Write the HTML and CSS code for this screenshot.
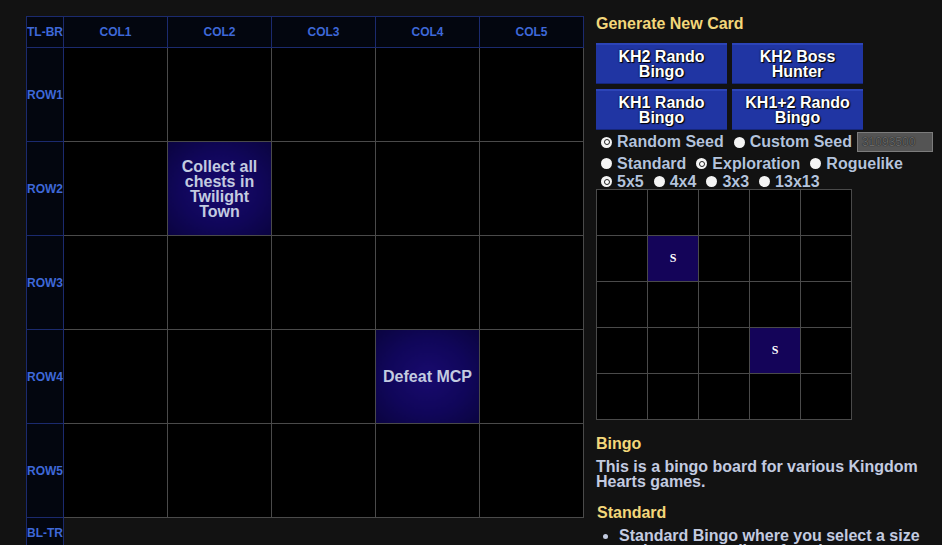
FILE: index.html
```html
<!DOCTYPE html>
<html>
<head>
<meta charset="utf-8">
<link rel="stylesheet" href="styles.css">
</head>
<body>
<div class="page">
  <table class="board">
    <colgroup>
      <col class="c0"><col class="cc"><col class="cc"><col class="cc"><col class="cc"><col class="cc">
    </colgroup>
    <tr class="hrow">
      <th class="lbl">TL-BR</th><th>COL1</th><th>COL2</th><th>COL3</th><th>COL4</th><th>COL5</th>
    </tr>
    <tr><th class="lbl">ROW1</th><td></td><td></td><td></td><td></td><td></td></tr>
    <tr><th class="lbl">ROW2</th><td></td><td class="on">Collect all chests in Twilight Town</td><td></td><td></td><td></td></tr>
    <tr><th class="lbl">ROW3</th><td></td><td></td><td></td><td></td><td></td></tr>
    <tr><th class="lbl">ROW4</th><td></td><td></td><td></td><td class="on">Defeat MCP</td><td></td></tr>
    <tr><th class="lbl">ROW5</th><td></td><td></td><td></td><td></td><td></td></tr>
    <tr class="brow"><th class="lbl">BL-TR</th><td class="empty" colspan="5"></td></tr>
  </table>

  <div class="side">
    <h3 class="title">Generate New Card</h3>
    <div class="buttons">
      <div class="btn">KH2 Rando<br>Bingo</div>
      <div class="btn">KH2 Boss<br>Hunter</div>
      <div class="btn">KH1 Rando<br>Bingo</div>
      <div class="btn">KH1+2 Rando<br>Bingo</div>
    </div>
    <div class="opts r1">
      <span class="opt"><span class="radio checked"></span><span>Random Seed</span></span>
      <span class="opt"><span class="radio"></span><span>Custom Seed</span></span>
      <span class="seed">31093500</span>
    </div>
    <div class="opts r2">
      <span class="opt"><span class="radio"></span><span>Standard</span></span>
      <span class="opt"><span class="radio checked"></span><span>Exploration</span></span>
      <span class="opt"><span class="radio"></span><span>Roguelike</span></span>
    </div>
    <div class="opts r3">
      <span class="opt"><span class="radio checked"></span><span>5x5</span></span>
      <span class="opt"><span class="radio"></span><span>4x4</span></span>
      <span class="opt"><span class="radio"></span><span>3x3</span></span>
      <span class="opt"><span class="radio"></span><span>13x13</span></span>
    </div>
    <div class="mini">
      <div></div><div></div><div></div><div></div><div></div>
      <div></div><div class="s">S</div><div></div><div></div><div></div>
      <div></div><div></div><div></div><div></div><div></div>
      <div></div><div></div><div></div><div class="s">S</div><div></div>
      <div></div><div></div><div></div><div></div><div></div>
    </div>
    <h3 class="head">Bingo</h3>
    <p class="text">This is a bingo board for various Kingdom Hearts games.</p>
    <h3 class="head std">Standard</h3>
    <ul class="list">
      <li>Standard Bingo where you select a size and try to get a line of goals.</li>
    </ul>
  </div>
</div>
</body>
</html>
```

FILE: styles.css
```css
html, body {
  margin: 0;
  padding: 0;
  background: #121212;
  overflow: hidden;
  height: 545px;
}
body {
  font-family: "Liberation Sans", Arial, sans-serif;
  font-weight: bold;
}
.page {
  display: flex;
  align-items: flex-start;
  padding: 16px 0 0 26px;
  gap: 12px;
}
.board {
  border-collapse: collapse;
  table-layout: fixed;
  width: 558px;
  flex: none;
}
.board col.c0 { width: 37px; }
.board col.cc { width: 104px; }
.board th {
  background: #03060f;
  border: 1px solid #1b2a6e;
  color: #3e68d8;
  font-size: 12px;
  font-weight: bold;
  padding: 0;
  height: 30px;
  text-align: center;
  overflow: hidden;
  white-space: nowrap;
}
.board th.lbl {
  text-align: left;
  padding: 0;
}
.board td {
  background: #000;
  border: 1px solid #4a4a4a;
  height: 93px;
  padding: 0;
  text-align: center;
  vertical-align: middle;
  color: #c3cbe0;
  font-size: 16px;
  line-height: 15px;
}
.board tr:nth-child(2) td { border-top-color: #1b2a6e; }
.board td.on {
  background: radial-gradient(ellipse at center, #180a6e 0%, #10065a 55%, #0a0440 100%);
  padding: 0 2px;
}
.board .brow th { height: 30px; }
.board td.empty {
  background: transparent;
  border: none;
  border-top: 1px solid #4a4a4a;
  height: 30px;
}
.side {
  width: 346px;
  flex: none;
}
.title {
  margin: 0;
  color: #f3d77a;
  font-size: 16px;
  line-height: 16px;
  height: 27px;
}
.buttons {
  display: grid;
  grid-template-columns: 131px 131px;
  column-gap: 5px;
  row-gap: 5px;
}
.btn {
  background: #2035a3;
  border-top: 2px solid #2c44b8;
  border-bottom: 1px solid #16267a;
  height: 38px;
  color: #fff;
  font-size: 16px;
  line-height: 15px;
  text-align: center;
  display: flex;
  align-items: center;
  justify-content: center;
  text-shadow: 1px 1px 1px #000, 0 0 2px #000;
}
.opts {
  display: flex;
  align-items: center;
  color: #b4c3dc;
  font-size: 16px;
  text-shadow: 0 0 1px #000;
  padding-left: 5px;
}
.opts.r1 { height: 22px; margin-top: 1px; }
.opts.r2 { height: 21px; }
.opts.r3 { height: 15px; }
.opt {
  display: flex;
  align-items: center;
  margin-right: 10px;
  white-space: nowrap;
}
.radio {
  width: 11px;
  height: 11px;
  border-radius: 50%;
  background: #f4f4f4;
  margin-right: 5px;
  position: relative;
  flex: none;
}
.radio.checked::after {
  content: "";
  position: absolute;
  left: 2.5px;
  top: 2.5px;
  width: 6px;
  height: 6px;
  box-sizing: border-box;
  border-radius: 50%;
  border: 1.5px solid #222;
  background: #fff;
}
.seed {
  width: 70px;
  height: 18px;
  background: #545454;
  border: 1px solid #7c7c7c;
  color: #686868;
  font-size: 12px;
  font-weight: normal;
  line-height: 18px;
  padding-left: 4px;
  margin-left: -5px;
  flex: none;
}
.mini {
  display: grid;
  grid-template-columns: repeat(5, 50px);
  grid-auto-rows: 45px;
  gap: 1px;
  background: #4a4a4a;
  border: 1px solid #4a4a4a;
  width: max-content;
}
.mini div {
  background: #000;
  display: flex;
  align-items: center;
  justify-content: center;
  color: #fff;
  font-family: "Liberation Serif", serif;
  font-size: 12px;
}
.mini div.s { background: #140459; }
.head {
  margin: 15px 0 0 0;
  color: #f3d77a;
  font-size: 16px;
  line-height: 18px;
}
.text {
  margin: 6px 0 0 0;
  color: #c3cbe0;
  font-size: 16px;
  line-height: 15px;
}
.head.std { margin-top: 15px; margin-left: 1px; }
.list {
  margin: 6px 0 0 0;
  padding-left: 23px;
  color: #c3cbe0;
  font-size: 16px;
  line-height: 15px;
}
```
